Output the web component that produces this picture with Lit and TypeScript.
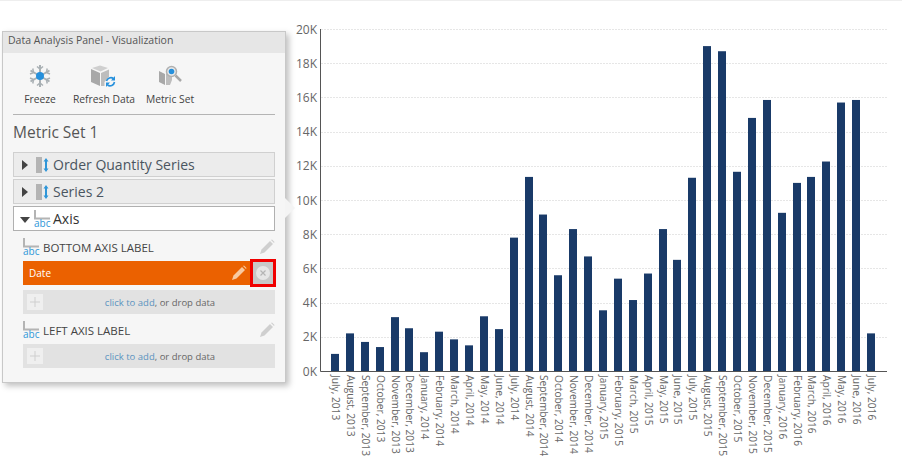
import { LitElement, html, css, svg } from "lit";
import { customElement } from "lit/decorators.js";

const months = ["July", "August", "September", "October", "November", "December", "January", "February", "March", "April", "May", "June"];
const values = [1000, 2200, 1700, 1400, 3150, 2500, 1100, 2300, 1850, 1500, 3200, 2450, 7800, 11350, 9150, 5600, 8300, 6700, 3550, 5400, 4150, 5700, 8300, 6500, 11300, 19000, 18700, 11650, 14800, 15850, 9250, 11000, 11350, 12250, 15700, 15850, 2200];

function label(i: number) {
    const year = 2013 + Math.floor((i + 6) / 12);
    return `${months[i % 12]}, ${year}`;
}

const axisIcon = html`
    <span class="axis-icon">
        <svg width="16" height="10" viewBox="0 0 16 10"><path d="M1 0V8.500H16" fill="none" stroke="#b4b4b4" stroke-width="2"/></svg>
        <span class="abc">abc</span>
    </span>
`;

const seriesIcon = html`
    <svg class="series-icon" width="13" height="16" viewBox="0 0 13 16">
        <rect x="0" y="0" width="6" height="16" fill="#b4b4b4"/>
        <path d="M10 1L12.500 4.500H11V11.500H12.500L10 15L7.500 11.500H9V4.500H7.500Z" fill="#2f96d8"/>
    </svg>
`;

const pencil = (color: string) => html`
    <svg width="16" height="16" viewBox="0 0 16 16">
        <path d="M1 15L2.500 10.500L11 2L14 5L5.500 13.500Z" fill="${color}"/>
        <path d="M12 1L13 0.500L15.500 3L15 4Z" fill="${color}"/>
    </svg>
`;

const plus = html`
    <span class="plus">
        <svg width="10" height="10" viewBox="0 0 10 10"><path d="M5 0V10M0 5H10" stroke="#cfcfcf" stroke-width="1"/></svg>
    </span>
`;

const freezeIcon = html`
    <svg width="24" height="24" viewBox="0 0 24 24">
        <g stroke="#a9b0b4" stroke-width="2" fill="none">
            <path d="M12 1V23M2.500 6.500L21.500 17.500M21.500 6.500L2.500 17.500"/>
            <path d="M9 2.500L12 5L15 2.500M9 21.500L12 19L15 21.500M2 10L5.500 8.500L4.800 4.500M22 10L18.500 8.500L19.200 4.500M2 14L5.500 15.500L4.800 19.500M22 14L18.500 15.500L19.200 19.500" stroke-width="1.500"/>
        </g>
        <circle cx="12" cy="12" r="4" fill="#2690dc"/>
    </svg>
`;

const refreshIcon = html`
    <svg width="26" height="22" viewBox="0 0 26 22">
        <path d="M0 4L9 8V21L0 17Z" fill="#a8a8a8"/>
        <path d="M10 8L18 4.500V12L13.500 17V21L10 21Z" fill="#bdbdbd"/>
        <path d="M1 3L9 0.500L17 3L9.500 6.500Z" fill="#cfcfcf"/>
        <path d="M15.500 16A4.500 4.500 0 0 1 22.500 13.500M23.500 17A4.500 4.500 0 0 1 16.500 20" fill="none" stroke="#2690dc" stroke-width="1.600"/>
        <path d="M24 11V15.500H20ZM15 22V17.500H19Z" fill="#2690dc"/>
    </svg>
`;

const metricIcon = html`
    <svg width="24" height="22" viewBox="0 0 24 22">
        <path d="M1 6L7 9V20L1 17Z" fill="#a8a8a8"/>
        <path d="M8 9L14 7V15L12 20L8 20Z" fill="#bdbdbd"/>
        <circle cx="13.500" cy="6.500" r="5" fill="#e9e9e9" stroke="#b0b0b0" stroke-width="1.500"/>
        <circle cx="13.500" cy="6.500" r="2.800" fill="#2690dc"/>
        <path d="M17.500 10.500L23 16" stroke="#a8a8a8" stroke-width="2.500"/>
    </svg>
`;

@customElement("data-chart")
export class DataChart extends LitElement {
    static styles = css`
        :host {
            display: block;
        }

        svg {
            display: block;
        }

        text {
            font-family: "Open Sans", "Liberation Sans", sans-serif;
            fill: #666;
        }

        .tick {
            font-size: 12px;
        }

        .month {
            font-size: 10.2px;
        }
    `;

    render() {
        const y = (v: number) => 371 - (v / 20000) * 342;
        const ticks = [0, 2, 4, 6, 8, 10, 12, 14, 16, 18, 20];
        return html`
            <svg width="616" height="467" viewBox="286 1 616 467">
                ${ticks.map((t) => svg`
                    ${t > 0 ? svg`<line x1="321" x2="887" y1="${Math.round(y(t * 1000)) + 0.5}" y2="${Math.round(y(t * 1000)) + 0.5}" stroke="#e6e6e6" stroke-dasharray="2 1"/>` : ""}
                    <text class="tick" x="317" y="${y(t * 1000) + 4.5}" text-anchor="end">${t}K</text>
                `)}
                ${values.map((v, i) => {
                    const x = 331 + i * 14.89;
                    return svg`
                        <rect x="${Math.round(x)}" y="${y(v)}" width="8" height="${371 - y(v)}" fill="#193a68"/>
                        <text class="month" transform="translate(${x + 1} 375) rotate(90)">${label(i)}</text>
                    `;
                })}
                <path d="M320.500 29V371.500H887" fill="none" stroke="#555" stroke-width="1"/>
            </svg>
        `;
    }
}

@customElement("app-root")
export class AppRoot extends LitElement {
    static styles = css`
        :host {
            display: flex;
            align-items: flex-start;
            width: 902px;
            height: 468px;
            overflow: hidden;
            border-top: 1px solid #eee;
            box-sizing: border-box;
            font-family: "Open Sans", "Liberation Sans", sans-serif;
            color: #555;
        }

        .panel {
            position: relative;
            box-sizing: border-box;
            width: 284px;
            height: 352px;
            margin: 30px 0 0 2px;
            flex: none;
            background: #f6f6f6;
            border: 1px solid #c8c8c8;
            box-shadow: 3px 3px 6px rgba(0, 0, 0, 0.25);
        }

        .tail {
            position: absolute;
            left: 282px;
            top: 166px;
            width: 0;
            height: 0;
            border-style: solid;
            border-width: 10px 0 10px 10px;
            border-color: transparent transparent transparent #f4f4f4;
        }

        .title {
            height: 21px;
            line-height: 17px;
            padding-left: 5px;
            background: #e6e6e6;
            font-size: 10.5px;
            color: #555;
        }

        .content {
            padding: 0 10px;
        }

        .tools {
            display: flex;
            height: 61px;
            border-bottom: 1px solid #b4b4b4;
            font-size: 10.3px;
            color: #444;
        }

        .tool {
            display: flex;
            flex-direction: column;
            align-items: center;
            justify-content: flex-end;
            gap: 3px;
            padding-bottom: 8px;
            white-space: nowrap;
        }

        .tool svg {
            display: block;
        }

        .tool-icon {
            height: 26px;
            display: flex;
            align-items: center;
        }

        .freeze {
            width: 54px;
        }

        .refresh {
            width: 74px;
        }

        .metric {
            width: 58px;
        }

        h2 {
            margin: 0;
            height: 37px;
            line-height: 34px;
            font-weight: 400;
            font-size: 15.5px;
            color: #555;
        }

        .row {
            display: flex;
            align-items: center;
            gap: 3px;
            box-sizing: border-box;
            height: 25px;
            margin-bottom: 2px;
            padding-left: 8px;
            background: #ececec;
            border: 1px solid #d0d0d0;
            font-size: 14px;
            color: #4a5560;
        }

        .row.open {
            background: #fff;
            border-color: #b0b0b0;
            color: #333;
        }

        .arrow {
            width: 0;
            height: 0;
            margin-right: 5px;
            border-style: solid;
            border-width: 5px 0 5px 6px;
            border-color: transparent transparent transparent #444;
        }

        .arrow.down {
            margin: 2px 1px 0 -2px;
            border-width: 6px 5px 0 5px;
            border-color: #444 transparent transparent transparent;
        }

        .series-icon {
            flex: none;
            margin-right: 1px;
        }

        .axis-icon {
            display: flex;
            flex-direction: column;
            flex: none;
            width: 16px;
            height: 18px;
        }

        .axis-icon svg {
            display: block;
        }

        .abc {
            font-size: 10px;
            line-height: 7px;
            color: #2f96d8;
        }

        .group {
            padding-left: 10px;
        }

        .group-head {
            display: flex;
            align-items: center;
            gap: 4px;
            height: 28px;
            font-size: 11.5px;
            color: #444;
        }

        .group-head .name {
            flex: 1;
        }

        .group-head svg {
            display: block;
        }

        .chip {
            display: flex;
            align-items: stretch;
            height: 24px;
        }

        .chip-main {
            flex: 1;
            display: flex;
            align-items: center;
            justify-content: space-between;
            padding: 0 3px 0 6px;
            background: #eb6100;
            color: #fff;
            font-size: 10px;
        }

        .chip-main svg {
            display: block;
        }

        .close {
            display: flex;
            align-items: center;
            justify-content: center;
            box-sizing: border-box;
            width: 26px;
            margin: -2px -1px -2px 0;
            background: #c8c8c8;
            border: 3px solid #f00000;
        }

        .drop {
            position: relative;
            display: flex;
            align-items: center;
            justify-content: center;
            height: 24px;
            margin-top: 5px;
            padding-left: 22px;
            background: #e2e2e2;
            font-size: 9.5px;
            color: #666;
        }

        .drop a {
            color: #5b93c0;
        }

        .plus {
            position: absolute;
            left: 4px;
            top: 4px;
            width: 16px;
            height: 16px;
            display: flex;
            align-items: center;
            justify-content: center;
            background: #efefef;
        }

        .second {
            margin-top: 2px;
        }

        .second .drop {
            margin-top: 0;
        }
    `;

    render() {
        return html`
            <section class="panel">
                <div class="title">Data Analysis Panel - Visualization</div>
                <div class="content">
                    <div class="tools">
                        <div class="tool freeze"><span class="tool-icon">${freezeIcon}</span>Freeze</div>
                        <div class="tool refresh"><span class="tool-icon">${refreshIcon}</span>Refresh Data</div>
                        <div class="tool metric"><span class="tool-icon">${metricIcon}</span>Metric Set</div>
                    </div>
                    <h2>Metric Set 1</h2>
                    <div class="row"><span class="arrow"></span>${seriesIcon}Order Quantity Series</div>
                    <div class="row"><span class="arrow"></span>${seriesIcon}Series 2</div>
                    <div class="row open"><span class="arrow down"></span>${axisIcon}Axis</div>
                    <div class="group">
                        <div class="group-head">${axisIcon}<span class="name">BOTTOM AXIS LABEL</span>${pencil("#cfcfcf")}</div>
                        <div class="chip">
                            <div class="chip-main">Date ${pencil("#f8c9a0")}</div>
                            <div class="close">
                                <svg width="14" height="14" viewBox="0 0 14 14">
                                    <circle cx="7" cy="7" r="7" fill="#e6e6e6"/>
                                    <path d="M4.500 4.500L9.500 9.500M9.500 4.500L4.500 9.500" stroke="#b5b5b5" stroke-width="1.200"/>
                                </svg>
                            </div>
                        </div>
                        <div class="drop">${plus}<span><a>click to add</a>, or drop data</span></div>
                    </div>
                    <div class="group second">
                        <div class="group-head">${axisIcon}<span class="name">LEFT AXIS LABEL</span>${pencil("#cfcfcf")}</div>
                        <div class="drop">${plus}<span><a>click to add</a>, or drop data</span></div>
                    </div>
                </div>
                <span class="tail"></span>
            </section>
            <data-chart></data-chart>
        `;
    }
}
